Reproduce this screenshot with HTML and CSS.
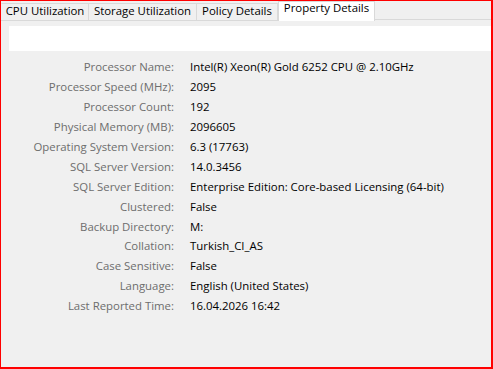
FILE: index.html
```html
<!DOCTYPE html>
<html>
<head>
<meta charset="utf-8">
<link rel="stylesheet" href="styles.css">
</head>
<body>
<div class="frame">
  <div class="tabs">
    <div class="tab t1">CPU Utilization</div>
    <div class="tab t2">Storage Utilization</div>
    <div class="tab t3">Policy Details</div>
    <div class="tab t4 active">Property Details</div>
    <div class="tab-rest"></div>
  </div>
  <div class="panel">
    <div class="blank"></div>
    <div class="props">
      <div class="lbl">Processor Name:</div><div class="val">Intel(R) Xeon(R) Gold 6252 CPU @ 2.10GHz</div>
      <div class="lbl">Processor Speed (MHz):</div><div class="val">2095</div>
      <div class="lbl">Processor Count:</div><div class="val">192</div>
      <div class="lbl">Physical Memory (MB):</div><div class="val">2096605</div>
      <div class="lbl">Operating System Version:</div><div class="val">6.3 (17763)</div>
      <div class="lbl">SQL Server Version:</div><div class="val">14.0.3456</div>
      <div class="lbl">SQL Server Edition:</div><div class="val">Enterprise Edition: Core-based Licensing (64-bit)</div>
      <div class="lbl">Clustered:</div><div class="val">False</div>
      <div class="lbl">Backup Directory:</div><div class="val">M:</div>
      <div class="lbl">Collation:</div><div class="val">Turkish_CI_AS</div>
      <div class="lbl">Case Sensitive:</div><div class="val">False</div>
      <div class="lbl">Language:</div><div class="val">English (United States)</div>
      <div class="lbl">Last Reported Time:</div><div class="val">16.04.2026 16:42</div>
    </div>
  </div>
</div>
</body>
</html>
```
FILE: styles.css
```css
html, body {
  margin: 0;
  padding: 0;
  background: #f0f0f0;
}
.frame {
  box-sizing: border-box;
  width: 493px;
  height: 369px;
  border-style: solid;
  border-color: #ff0000;
  border-width: 1px 2px 2px 1px;
  background: #f0f0f0;
  font-family: "Open Sans", "Liberation Sans", sans-serif;
  font-size: 11.4px;
  color: #000;
  display: flex;
  flex-direction: column;
  overflow: hidden;
}
.tabs {
  display: flex;
  align-items: flex-end;
  height: 19px;
}
.tab {
  box-sizing: border-box;
  height: 17px;
  border: 1px solid #d9d9d9;
  border-bottom: none;
  border-left: none;
  background: #f0f0f0;
  text-align: center;
  line-height: 13px;
  white-space: nowrap;
}
.t1 { width: 88px; border-left: 1px solid #f0f0f0; }
.t2 { width: 108px; }
.t3 { width: 81px; }
.t4 { width: 97px; }
.tab.active {
  background: #ffffff;
  border-left: 1px solid #d9d9d9;
  line-height: 12px;
  margin-bottom: -1px;
  height: 20px;
}
.tab-rest {
  flex: 1;
  height: 1px;
  background: #d9d9d9;
}
.tabs .tab:not(.active) {
  box-shadow: 0 1px 0 #d9d9d9;
}
.panel {
  flex: 1;
  border-top: 1px solid transparent;
  padding: 5px 0 0 8px;
}
.blank {
  height: 25px;
  background: #ffffff;
}
.props {
  display: grid;
  grid-template-columns: 173px 1fr;
  column-gap: 16px;
  margin: 6px 0 0 -8px;
  grid-auto-rows: 19.9px;
  align-items: center;
}
.lbl {
  text-align: right;
  color: #6d6d6d;
  white-space: nowrap;
}
.val {
  white-space: nowrap;
}
```
